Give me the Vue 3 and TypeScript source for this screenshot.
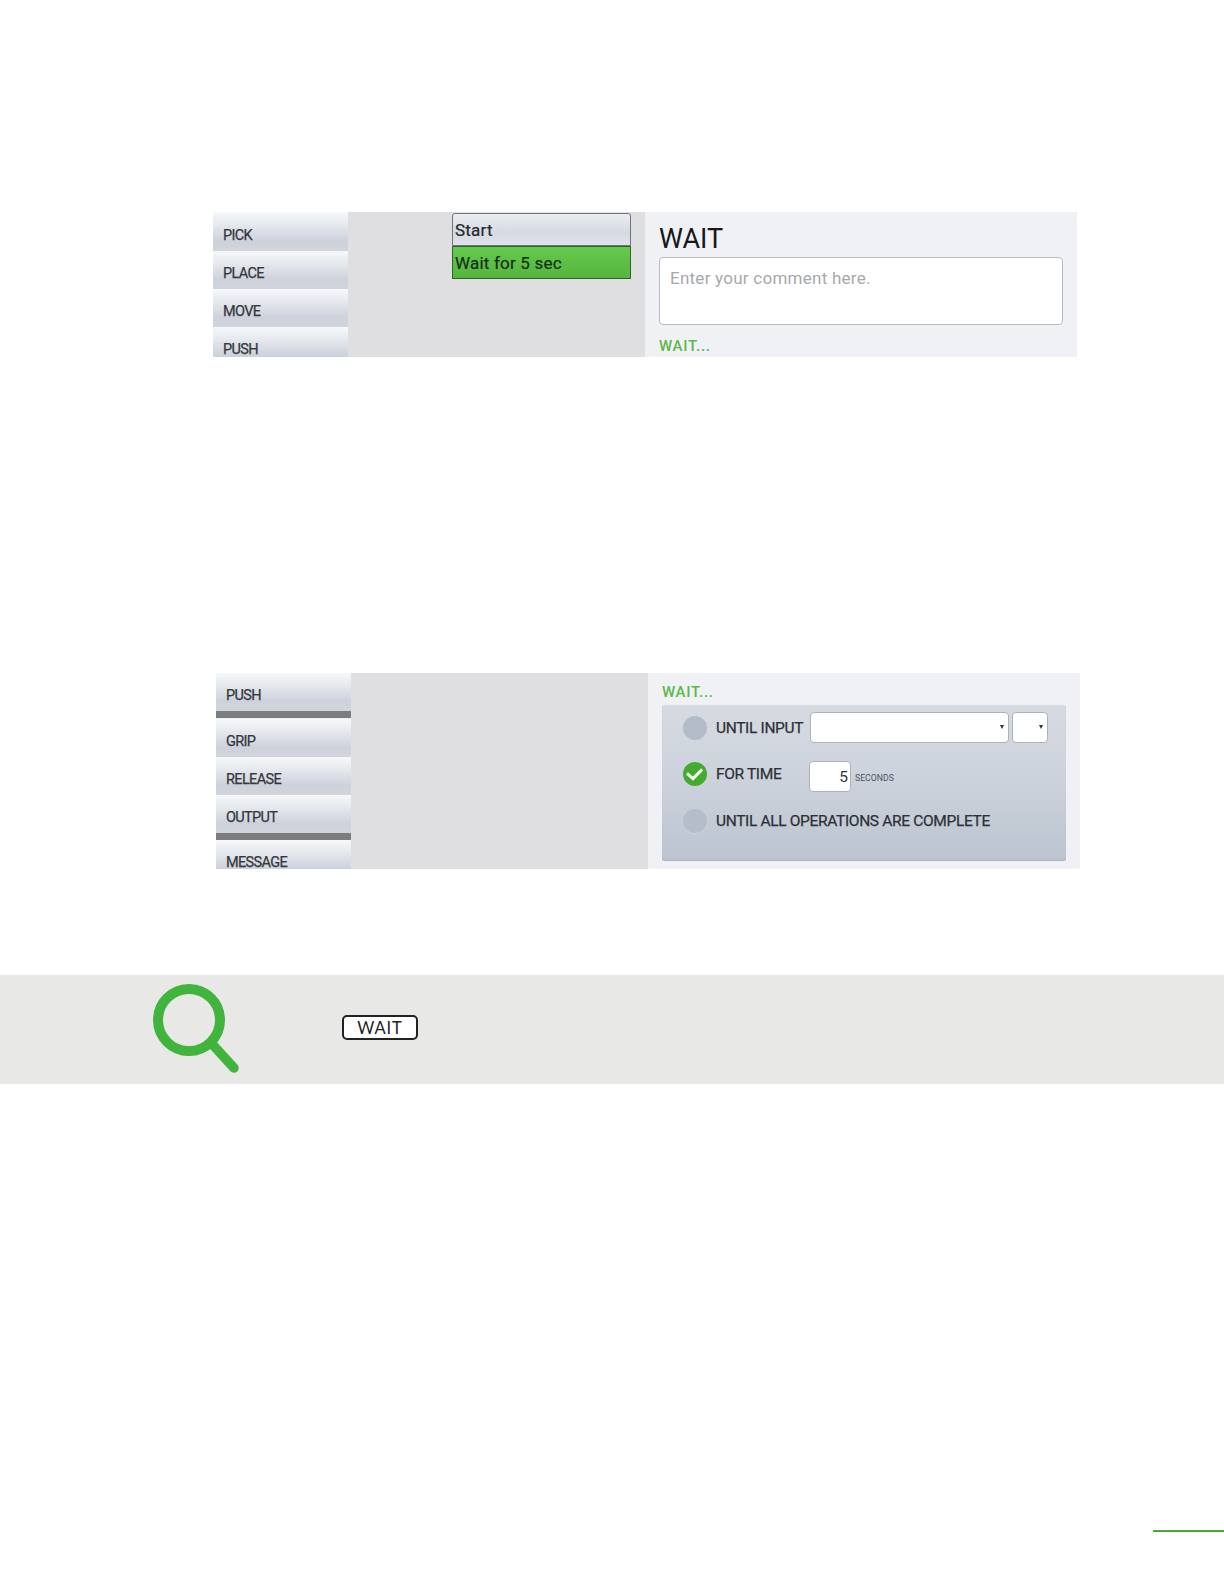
<script setup lang="ts">
import { ref } from 'vue';

interface Command {
  label: string;
  divider?: boolean;
}

type WaitMode = 'input' | 'time' | 'complete';

const topCommands: Command[] = [
  { label: 'PICK' },
  { label: 'PLACE' },
  { label: 'MOVE' },
  { label: 'PUSH' },
];

const bottomCommands: Command[] = [
  { label: 'PUSH', divider: true },
  { label: 'GRIP' },
  { label: 'RELEASE' },
  { label: 'OUTPUT', divider: true },
  { label: 'MESSAGE' },
];

const comment = ref('');
const seconds = ref('5');
const mode = ref<WaitMode>('time');
</script>

<template>
  <main class="page">
    <section class="shot shot-top">
      <nav class="commands">
        <div v-for="c in topCommands" :key="c.label" class="command">{{ c.label }}</div>
      </nav>
      <div class="canvas">
        <div class="program">
          <div class="step">Start</div>
          <div class="step active">Wait for 5 sec</div>
        </div>
      </div>
      <div class="details">
        <h1>WAIT</h1>
        <textarea v-model="comment" placeholder="Enter your comment here."></textarea>
        <h2>WAIT...</h2>
      </div>
    </section>

    <section class="shot shot-bottom">
      <nav class="commands">
        <template v-for="c in bottomCommands" :key="c.label">
          <div class="command">{{ c.label }}</div>
          <div v-if="c.divider" class="divider"></div>
        </template>
      </nav>
      <div class="canvas"></div>
      <div class="details">
        <h2>WAIT...</h2>
        <div class="options">
          <div class="option">
            <span class="radio" @click="mode = 'input'"></span>
            <span class="label until-input">UNTIL INPUT</span>
            <div class="select wide"><i></i></div>
            <div class="select narrow"><i></i></div>
          </div>
          <div class="option">
            <span class="radio" :class="{ checked: mode === 'time' }" @click="mode = 'time'">
              <svg v-if="mode === 'time'" width="24" height="24" viewBox="0 0 24 24">
                <path d="M4 11.4 L10 16.6 L19.2 7.4" fill="none" stroke="#f4faf2" stroke-width="3" />
              </svg>
            </span>
            <span class="label for-time">FOR TIME</span>
            <input v-model="seconds" class="seconds" type="text" />
            <span class="unit">SECONDS</span>
          </div>
          <div class="option">
            <span class="radio faint" @click="mode = 'complete'"></span>
            <span class="label">UNTIL ALL OPERATIONS ARE COMPLETE</span>
          </div>
        </div>
      </div>
    </section>

    <section class="band">
      <svg class="magnifier" width="90" height="94" viewBox="0 0 90 94">
        <circle cx="37" cy="38" r="31" fill="none" stroke="#40b43c" stroke-width="10" />
        <path d="M61 63 L82 86" stroke="#40b43c" stroke-width="9.5" stroke-linecap="round" />
      </svg>
      <span class="key">WAIT</span>
    </section>

    <div class="footer-rule"></div>
  </main>
</template>

<style>
body {
  margin: 0;
  background: #fff;
}
</style>

<style scoped>
.page {
  width: 1224px;
  height: 1584px;
  box-sizing: border-box;
  padding-top: 212px;
  overflow: hidden;
  display: flex;
  flex-direction: column;
  background: #fff;
  font-family: Roboto, "Liberation Sans", sans-serif;
}

.shot {
  display: flex;
  flex: none;
  width: 864px;
  overflow: hidden;
  background: #f0f1f5;
}

.shot-top {
  height: 145px;
  margin-left: 213px;
}

.shot-bottom {
  height: 196px;
  margin-top: 316px;
  margin-left: 216px;
}

.commands {
  flex: none;
  width: 135px;
}

.command {
  height: 38px;
  box-sizing: border-box;
  padding: 17px 0 0 10px;
  background: linear-gradient(#f6f8fa, #e4e7ec 35%, #cdd1dc 75%, #d2d5dc);
  color: #34363b;
  font-size: 14.5px;
  line-height: 12px;
  letter-spacing: -0.65px;
  white-space: nowrap;
  -webkit-text-stroke: 0.25px #34363b;
}

.shot-top .command:first-child {
  height: 39px;
  padding-top: 18px;
}

.divider {
  height: 7px;
  margin-bottom: 0.5px;
  background: #7b7d7e;
}

.canvas {
  flex: none;
  width: 297px;
  box-sizing: border-box;
  background: #dfdfe1;
}

.program {
  width: 179px;
  margin: 1px 0 0 104px;
}

.step {
  height: 33px;
  box-sizing: border-box;
  padding-left: 2px;
  border: 1px solid #70747a;
  border-radius: 3px 3px 0 0;
  background: linear-gradient(#ebedf2, #d5d9e2 60%, #e0e3ea);
  color: #25272b;
  font-size: 17px;
  line-height: 33px;
  letter-spacing: 0.2px;
  white-space: nowrap;
  -webkit-text-stroke: 0.2px #25272b;
}

.step.active {
  border-color: #2f6526;
  border-radius: 0;
  background: linear-gradient(#66ca4e, #54b53d);
  color: #13300f;
}

.details {
  flex: 1;
  padding-left: 14px;
}

h1 {
  margin: 0;
  padding-top: 12px;
  height: 33px;
  color: #17181a;
  font-size: 27px;
  font-weight: 400;
  line-height: 30px;
}

h2 {
  margin: 0;
  color: #5bb84a;
  font-size: 15px;
  font-weight: 500;
  line-height: 20px;
  letter-spacing: 0.7px;
}

textarea {
  display: block;
  width: 404px;
  height: 68px;
  box-sizing: border-box;
  padding: 9px 10px;
  border: 1.5px solid #b7babe;
  border-radius: 4px;
  outline: none;
  resize: none;
  background: #fff;
  font: 17px/22px Roboto, sans-serif;
  letter-spacing: 0.25px;
}

textarea::placeholder {
  color: #a7a8aa;
  opacity: 1;
}

.shot-top h2 {
  margin-top: 11px;
}

.shot-bottom h2 {
  padding: 9px 0 3px;
}

.options {
  width: 404px;
  height: 156px;
  box-sizing: border-box;
  padding-left: 21px;
  border-radius: 3px;
  background: linear-gradient(#d6dbe1, #cdd3dd 45%, #bbc4cf);
  box-shadow: inset 0 -1px 1px #abb3bf;
}

.option {
  display: flex;
  align-items: center;
  height: 46.5px;
}

.radio {
  flex: none;
  width: 24px;
  height: 24px;
  border-radius: 50%;
  background: #b3bbc8;
  cursor: pointer;
}

.radio.faint {
  background: #b6bdca;
  box-shadow: 0 1px 0 #ccd3dc;
}

.radio.checked {
  margin-bottom: 2px;
  background: #43ab2d;
}

.radio svg {
  display: block;
}

.label {
  margin-left: 9px;
  color: #2d3037;
  font-size: 15.5px;
  letter-spacing: -0.34px;
  white-space: nowrap;
  -webkit-text-stroke: 0.25px #2d3037;
}

.until-input,
.for-time {
  flex: none;
  width: 94px;
}

.for-time {
  margin-bottom: 2px;
}

.select {
  display: flex;
  flex: none;
  align-items: center;
  justify-content: flex-end;
  height: 31px;
  box-sizing: border-box;
  margin-bottom: 1px;
  padding: 0 4px 2px 0;
  border: 1px solid #aeb2b8;
  border-radius: 4px;
  background: #fff;
}

.select i {
  border: 2.5px solid transparent;
  border-top: 4px solid #333;
  border-bottom: 0;
}

.wide {
  width: 199px;
}

.narrow {
  width: 36px;
  margin-left: 3px;
}

.seconds {
  width: 42px;
  height: 31px;
  box-sizing: border-box;
  margin: 4px 0 0 -1px;
  padding: 0 2px;
  border: 1px solid #aeb2b8;
  border-radius: 4px;
  outline: none;
  background: #fff;
  color: #333;
  font: 15.5px Roboto, sans-serif;
  text-align: right;
}

.unit {
  margin: 6px 0 0 4px;
  color: #50545c;
  font-size: 8.7px;
}

.band {
  display: flex;
  flex: none;
  height: 109px;
  margin-top: 106px;
  background: #e8e8e6;
}

.magnifier {
  flex: none;
  margin: 7px 0 0 152px;
}

.key {
  width: 76px;
  height: 25px;
  box-sizing: border-box;
  margin: 40px 0 0 100px;
  border: 2px solid #222;
  border-radius: 5px;
  background: #fff;
  color: #222;
  font: 16.5px/23px Lato, sans-serif;
  letter-spacing: 0.9px;
  text-align: center;
}

.footer-rule {
  flex: none;
  align-self: flex-end;
  width: 71px;
  height: 2px;
  margin-top: 446px;
  background: #4ca736;
}
</style>
